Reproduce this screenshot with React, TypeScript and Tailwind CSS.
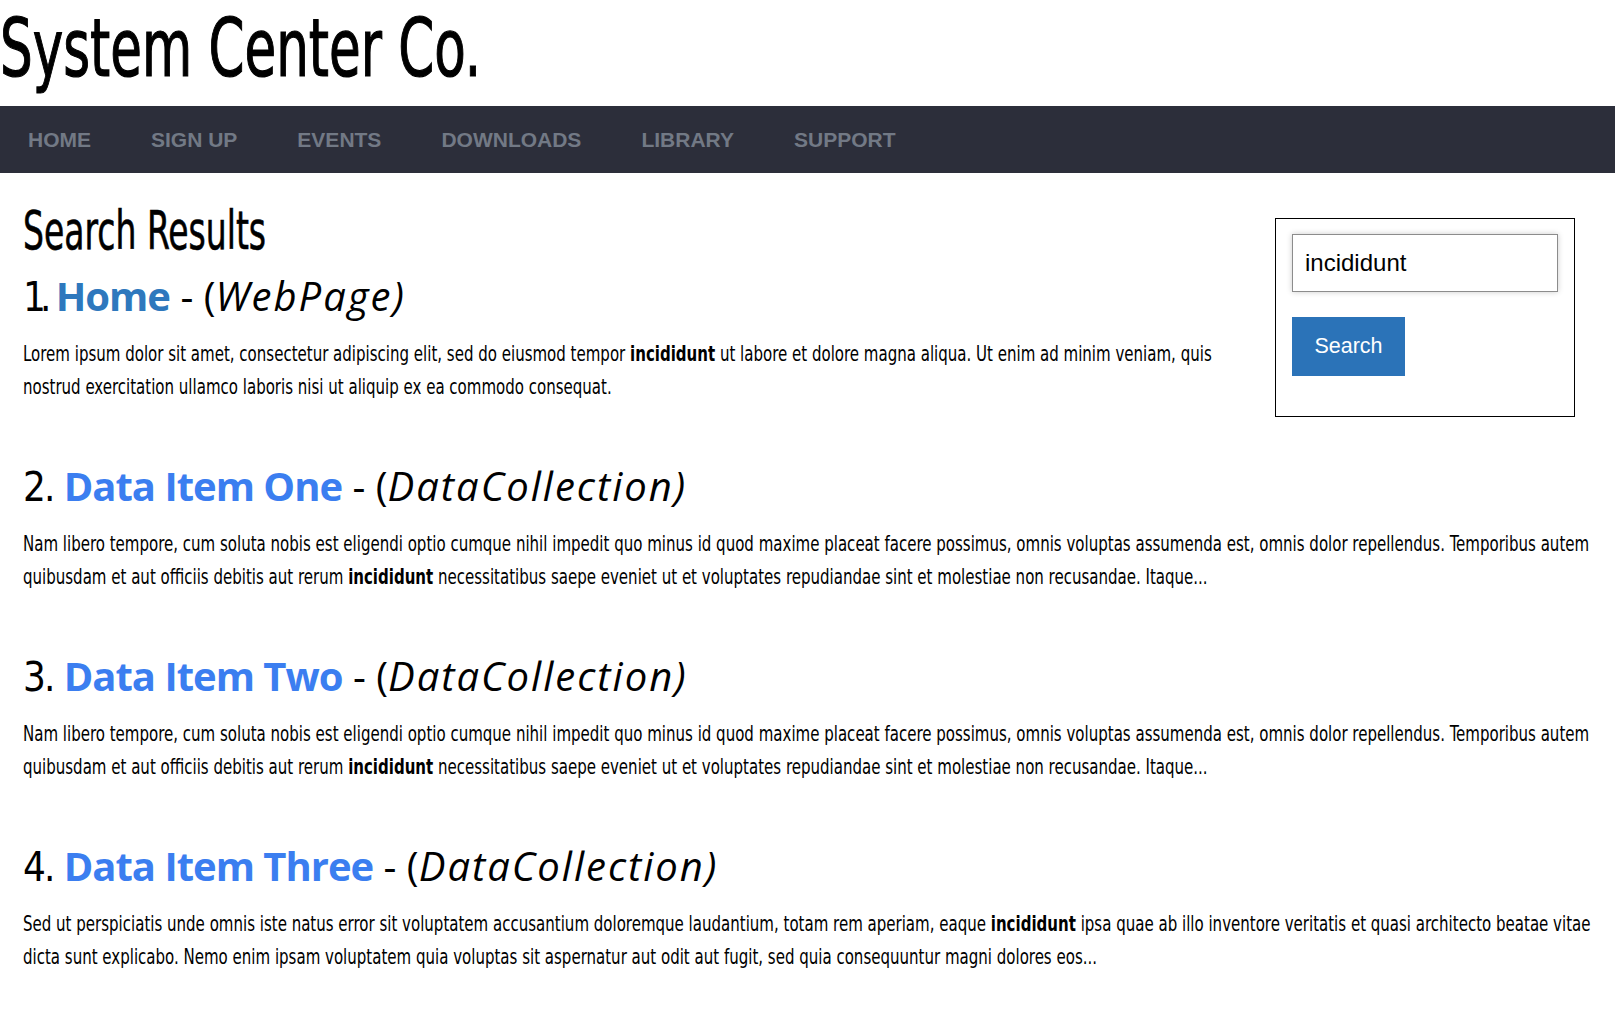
import React from 'react'

// Condensed face available offline; the tall narrow look is finished with scale-x
const condensed = "font-['DejaVu_Sans_Condensed','DejaVu_Sans',sans-serif]"
const poppinsLike = "font-['Open_Sans',sans-serif]"
const arial = "font-['Liberation_Sans',Arial,sans-serif]"

const navItems = ['HOME', 'SIGN UP', 'EVENTS', 'DOWNLOADS', 'LIBRARY', 'SUPPORT']

type Result = {
  n: number
  title: string
  kind: string
  linkColor: string
  before: string
  after: string
}

const results: Result[] = [
  {
    n: 1,
    title: 'Home',
    kind: 'WebPage',
    linkColor: 'text-[#2e78bd]',
    before: 'Lorem ipsum dolor sit amet, consectetur adipiscing elit, sed do eiusmod tempor',
    after: 'ut labore et dolore magna aliqua. Ut enim ad minim veniam, quis nostrud exercitation ullamco laboris nisi ut aliquip ex ea commodo consequat.',
  },
  {
    n: 2,
    title: 'Data Item One',
    kind: 'DataCollection',
    linkColor: 'text-[#3b7ef0]',
    before:
      'Nam libero tempore, cum soluta nobis est eligendi optio cumque nihil impedit quo minus id quod maxime placeat facere possimus, omnis voluptas assumenda est, omnis dolor repellendus. Temporibus autem quibusdam et aut officiis debitis aut rerum',
    after: 'necessitatibus saepe eveniet ut et voluptates repudiandae sint et molestiae non recusandae. Itaque...',
  },
  {
    n: 3,
    title: 'Data Item Two',
    kind: 'DataCollection',
    linkColor: 'text-[#3b7ef0]',
    before:
      'Nam libero tempore, cum soluta nobis est eligendi optio cumque nihil impedit quo minus id quod maxime placeat facere possimus, omnis voluptas assumenda est, omnis dolor repellendus. Temporibus autem quibusdam et aut officiis debitis aut rerum',
    after: 'necessitatibus saepe eveniet ut et voluptates repudiandae sint et molestiae non recusandae. Itaque...',
  },
  {
    n: 4,
    title: 'Data Item Three',
    kind: 'DataCollection',
    linkColor: 'text-[#3b7ef0]',
    before:
      'Sed ut perspiciatis unde omnis iste natus error sit voluptatem accusantium doloremque laudantium, totam rem aperiam, eaque',
    after:
      'ipsa quae ab illo inventore veritatis et quasi architecto beatae vitae dicta sunt explicabo. Nemo enim ipsam voluptatem quia voluptas sit aspernatur aut odit aut fugit, sed quia consequuntur magni dolores eos...',
  },
]

function ResultItem({ r, top }: { r: Result; top: string }) {
  return (
    <section>
      <h3 className={`${poppinsLike} ${top} text-[40px] leading-[48px] font-normal`}>
        {/* the "1" is a narrow glyph in the original face */}
        <span className={`${condensed} ${r.n === 1 ? 'tracking-[-6px]' : 'tracking-[-2px]'}`}>{r.n}.</span>{' '}
        <a href="#" className={`${r.linkColor} font-bold tracking-[-1px] no-underline`}>
          {r.title}
        </a>{' '}
        - (<em className="tracking-[2px]">{r.kind})</em>
      </h3>
      {/* laid out 125.8% wide, then squeezed back to the column width */}
      <p className={`${condensed} mt-[17px] w-[125.8%] origin-left scale-x-[0.795] text-[21px] leading-[33px]`}>
        {r.before} <b>incididunt</b> {r.after}
      </p>
    </section>
  )
}

export default function App() {
  return (
    <div className="min-h-screen overflow-x-hidden bg-white text-black">
      {/* header */}
      <header className="h-[106px] pt-[8px]">
        <h1 className={`${condensed} origin-left scale-x-[0.707] text-[81px] leading-none [-webkit-text-stroke:1.2px_black]`}>
          System Center Co.
        </h1>
      </header>

      {/* nav */}
      <nav className={`${arial} h-[67px] bg-[#2c2e3a] flex items-center pl-[28px] gap-[60px]`}>
        {navItems.map(item => (
          <a key={item} href="#" className="text-[21px] font-bold text-[#727985] no-underline">
            {item}
          </a>
        ))}
      </nav>

      <main className="pl-[23px] pr-[5px]">
        <div className="flex items-start">
          <div className="w-[1215px]">
            <h2 className={`${condensed} pt-[31px] origin-left scale-x-[0.68] text-[54px] leading-none [-webkit-text-stroke:0.6px_black]`}>
              Search Results
            </h2>
            <ResultItem r={results[0]} top="mt-[14px]" />
          </div>

          {/* search box */}
          <aside className="ml-auto mt-[45px] mr-[35px] w-[300px] border border-black px-[16px] pt-[15px] pb-[40px]">
            <input
              className={`${arial} block w-[266px] h-[58px] border border-[#8c8c8c] px-[12px] text-[24px] text-black shadow-[0_0_6px_rgba(0,0,0,0.2)] outline-none`}
              defaultValue="incididunt"
            />
            <button className={`${arial} mt-[25px] h-[59px] w-[113px] bg-[#2b73b8] text-white text-[21.5px]`}>Search</button>
          </aside>
        </div>

        {results.slice(1).map((r, i) => (
          <ResultItem key={r.n} r={r} top={i === 0 ? 'mt-[45px]' : 'mt-[58px]'} />
        ))}
      </main>
    </div>
  )
}
